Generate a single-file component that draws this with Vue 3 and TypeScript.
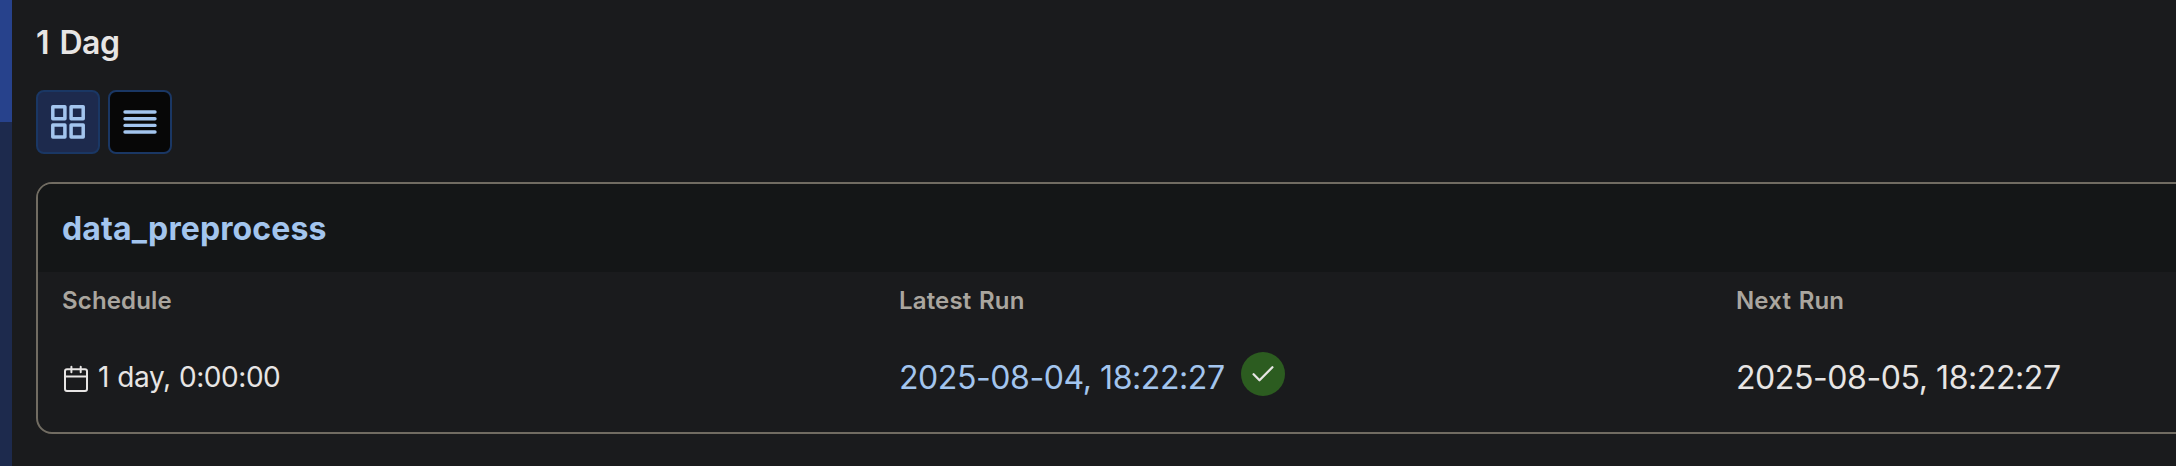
<script setup lang="ts">
interface Dag {
  name: string
  schedule: string
  latestRun: string
  nextRun: string
}

const dags: Dag[] = [
  {
    name: 'data_preprocess',
    schedule: '1 day, 0:00:00',
    latestRun: '2025-08-04, 18:22:27',
    nextRun: '2025-08-05, 18:22:27',
  },
]
</script>

<template>
  <div class="page">
    <aside class="rail"><div class="rail-active"></div></aside>
    <main class="content">
      <h2 class="heading">{{ dags.length }} Dag</h2>
      <div class="views">
        <button class="view view-on" aria-label="Card view">
          <svg width="40" height="40" viewBox="0 0 40 40" fill="none" stroke="#a3c5ee" stroke-width="3.5" stroke-linejoin="round">
            <rect x="4.8" y="4.8" width="12.1" height="11.9" />
            <rect x="23.1" y="4.8" width="12.1" height="11.9" />
            <rect x="4.8" y="23.1" width="12.1" height="11.9" />
            <rect x="23.1" y="23.1" width="12.1" height="11.9" />
          </svg>
        </button>
        <button class="view" aria-label="Table view">
          <svg width="40" height="40" viewBox="0 0 40 40" fill="none" stroke="#a3c5ee" stroke-width="3.4" stroke-linecap="round">
            <path d="M5 10H35M5 16.7H35M5 23.4H35M5 30H35" />
          </svg>
        </button>
      </div>
      <article v-for="dag in dags" :key="dag.name" class="card">
        <header class="card-head"><a class="name">{{ dag.name }}</a></header>
        <div class="grid">
          <section>
            <h3 class="label">Schedule</h3>
            <p class="value schedule">
              <svg class="calendar" width="28" height="28" viewBox="0 0 28 28" fill="none" stroke="#e7e5e4" stroke-width="2" stroke-linecap="round" stroke-linejoin="round">
                <rect x="3" y="5.2" width="22" height="21.8" rx="2" />
                <path d="M3 12.5H25M9.4 2.8V8.3M18.7 2.8V8.3" />
              </svg>
              <span class="interval">{{ dag.schedule }}</span>
            </p>
          </section>
          <section>
            <h3 class="label">Latest Run</h3>
            <p class="value">
              <a class="date link">{{ dag.latestRun }}</a>
              <span class="badge">
                <svg width="24" height="24" viewBox="0 0 24 24" fill="none" stroke="#e7e5e4" stroke-width="2.3" stroke-linecap="round" stroke-linejoin="round">
                  <path d="M2.6 12.2L8.5 18.2L21.4 5.2" />
                </svg>
              </span>
            </p>
          </section>
          <section>
            <h3 class="label">Next Run</h3>
            <p class="value"><span class="date">{{ dag.nextRun }}</span></p>
          </section>
        </div>
      </article>
    </main>
  </div>
</template>

<style>
body {
  margin: 0;
  background: #1a1b1d;
}
</style>

<style scoped>
.page {
  display: flex;
  box-sizing: border-box;
  width: 2176px;
  height: 466px;
  overflow: hidden;
  background: #1a1b1d;
  color: #e7e5e4;
  font-family: Inter, "Liberation Sans", sans-serif;
}
.rail {
  flex: none;
  width: 12px;
  background: #1d2a4d;
}
.rail-active {
  height: 122px;
  background: #27428c;
}
.content {
  flex: none;
  width: 2300px;
  box-sizing: border-box;
  padding: 19px 0 0 24px;
}
.heading {
  margin: 0;
  height: 48px;
  line-height: 48px;
  font-size: 32px;
  font-weight: 600;
  letter-spacing: -0.6px;
  word-spacing: 3.2px;
}
.views {
  display: flex;
  gap: 8px;
  margin-top: 23px;
}
.view {
  display: flex;
  align-items: center;
  justify-content: center;
  box-sizing: border-box;
  width: 64px;
  height: 64px;
  padding: 0;
  border: 2px solid #1a3764;
  border-radius: 8px;
  background: #070707;
}
.view-on {
  background: #1d2a4d;
}
.card {
  box-sizing: border-box;
  width: 2276px;
  height: 252px;
  margin-top: 28px;
  border: 2px solid #716c62;
  border-radius: 16px;
  overflow: hidden;
}
.card-head {
  display: flex;
  align-items: center;
  box-sizing: border-box;
  height: 88px;
  padding: 2px 24px 0;
  background: #141617;
}
.name {
  color: #a3c5ee;
  font-size: 32px;
  font-weight: 700;
  line-height: 48px;
  letter-spacing: 0.12px;
}
.grid {
  display: grid;
  grid-template-columns: repeat(3, 821px);
  column-gap: 16px;
  padding: 11px 24px;
}
.label {
  margin: 0;
  height: 36px;
  color: #aaa69f;
  font-size: 24px;
  font-weight: 600;
  line-height: 36px;
  letter-spacing: 0.15px;
  word-spacing: 1.5px;
}
.value {
  display: flex;
  align-items: center;
  height: 48px;
  margin: 33px 0 0;
  font-size: 28px;
}
.schedule {
  gap: 8px;
}
.calendar {
  margin-top: 4px;
}
.interval {
  padding-top: 1px;
  letter-spacing: -0.45px;
  word-spacing: 1px;
}
.date {
  padding-top: 2px;
  font-size: 32px;
  letter-spacing: -0.42px;
}
.link {
  color: #a3c5ee;
}
.badge {
  display: flex;
  align-items: center;
  justify-content: center;
  width: 44px;
  height: 44px;
  margin: -4px 0 0 16px;
  border-radius: 50%;
  background: #2c5c20;
}
</style>
